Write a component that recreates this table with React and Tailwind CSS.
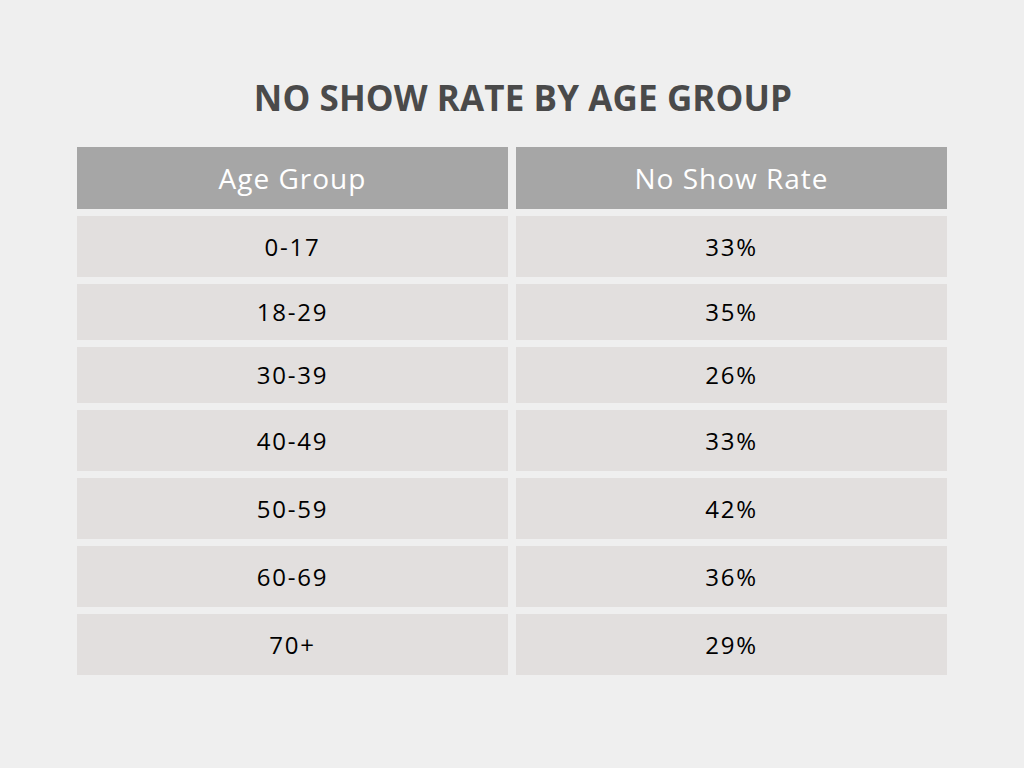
import React from 'react';

const rows = [
  { age: '0-17', rate: '33%', h: 'h-[61px]' },
  { age: '18-29', rate: '35%', h: 'h-[56px]' },
  { age: '30-39', rate: '26%', h: 'h-[56px]' },
  { age: '40-49', rate: '33%', h: 'h-[61px]' },
  { age: '50-59', rate: '42%', h: 'h-[61px]' },
  { age: '60-69', rate: '36%', h: 'h-[61px]' },
  { age: '70+', rate: '29%', h: 'h-[61px]' },
];

const App = () => {
  return (
    <div className="w-[1024px] h-[768px] bg-[#efefef] flex flex-col items-center font-['Open_Sans',sans-serif]">
      <h1 className="mt-[74px] ml-[22px] text-[35px] leading-[48px] font-bold text-[#4a4a4a] tracking-[0.1px]">
        NO SHOW RATE BY AGE GROUP
      </h1>
      <div className="mt-[25px] w-[870px] flex flex-col gap-[7px]">
        <div className="flex gap-[8px] h-[62px]">
          <div className="flex-1 bg-[#a6a6a6] flex items-center justify-center text-white text-[28px] tracking-[1px]">Age Group</div>
          <div className="flex-1 bg-[#a6a6a6] flex items-center justify-center text-white text-[28px] tracking-[1px]">No Show Rate</div>
        </div>
        {rows.map((r) => (
          <div key={r.age} className={`flex gap-[8px] ${r.h}`}>
            <div className="flex-1 bg-[#e2dfde] flex items-center justify-center text-black text-[24px] tracking-[1.8px]">{r.age}</div>
            <div className="flex-1 bg-[#e2dfde] flex items-center justify-center text-black text-[24px] tracking-[1.8px]">{r.rate}</div>
          </div>
        ))}
      </div>
    </div>
  );
};

export default App;
